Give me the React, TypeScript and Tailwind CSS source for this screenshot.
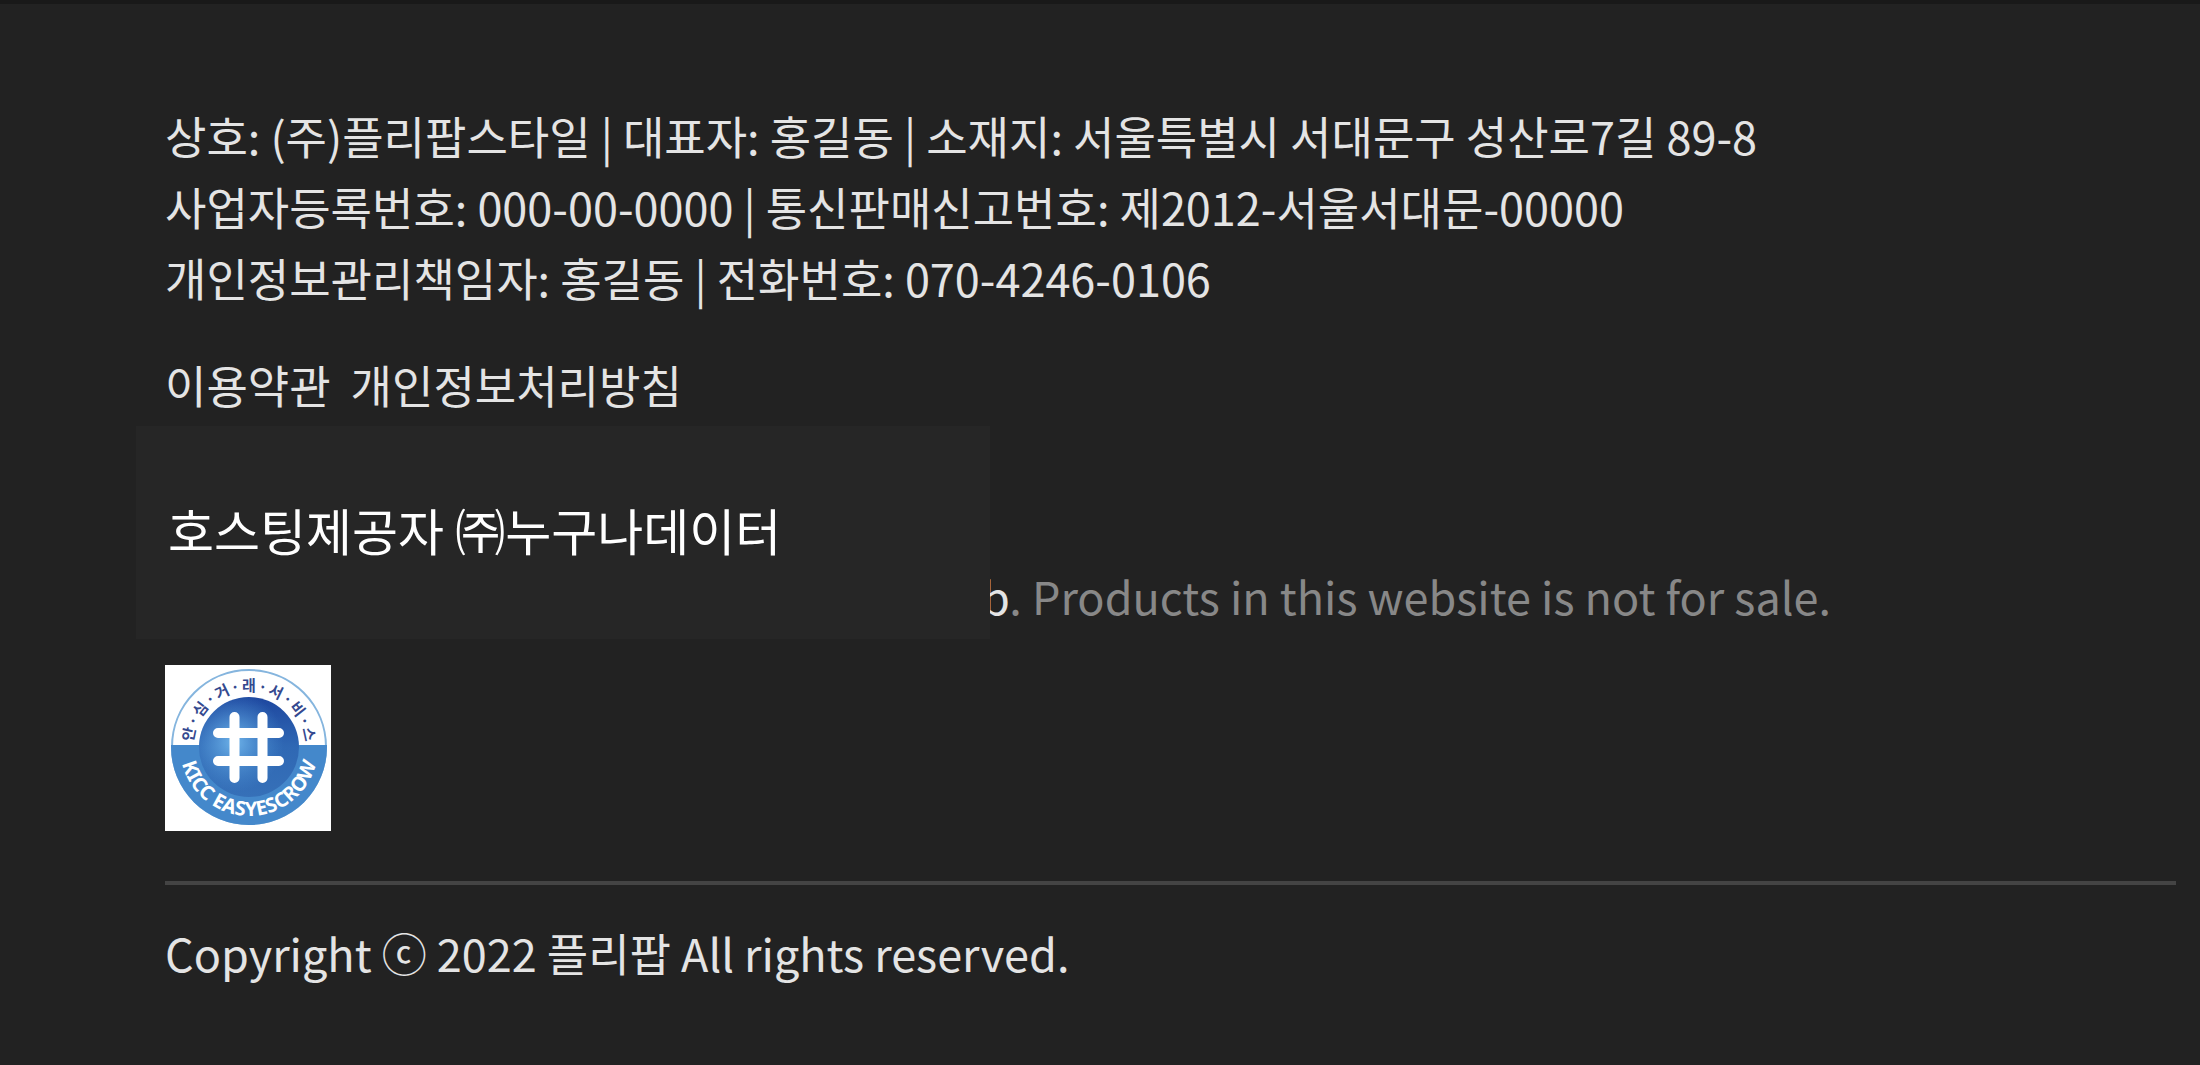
const companyInfo = [
  '상호: (주)플리팝스타일 | 대표자: 홍길동 | 소재지: 서울특별시 서대문구 성산로7길 89-8',
  '사업자등록번호: 000-00-0000 | 통신판매신고번호: 제2012-서울서대문-00000',
  '개인정보관리책임자: 홍길동 | 전화번호: 070-4246-0106',
];

const sealTop = '안·심·거·래·서·비·스'.split('');

function EscrowSeal() {
  return (
    <svg
      className="block size-[166px] bg-white"
      viewBox="0 0 166 166"
      role="img"
      aria-label="KICC EASYESCROW"
    >
      <defs>
        <linearGradient id="sealCore" x1="0" y1="0" x2="0" y2="1">
          <stop offset="0" stopColor="#1e479f" />
          <stop offset="0.5" stopColor="#2f68b4" />
          <stop offset="1" stopColor="#3670b8" />
        </linearGradient>
        <radialGradient id="sealGlow" cx="0.35" cy="0.45" r="0.5">
          <stop offset="0" stopColor="#6fb4ea" />
          <stop offset="1" stopColor="#4a90d4" stopOpacity="0" />
        </radialGradient>
        <path id="sealArc" d="M15 82a69 69 0 0 0 138 0" />
      </defs>
      <circle cx="84" cy="82" r="77" fill="#fff" stroke="#85b5de" strokeWidth="2" />
      <path d="M6 80h156v2a78 78 0 0 1 -156 0z" fill="#4488cb" />
      <circle cx="84" cy="82" r="50" fill="url(#sealCore)" />
      <circle cx="84" cy="82" r="50" fill="url(#sealGlow)" />
      <path
        d="M69.5 52v61M97.5 52v61M53 68h61M53 96h61"
        fill="none"
        stroke="#fff"
        strokeWidth="10"
        strokeLinecap="round"
      />
      {sealTop.map((letter, i) => (
        <text
          key={i}
          x="84"
          y="26"
          textAnchor="middle"
          transform={`rotate(${(i - 6) * 13} 84 82)`}
          className="fill-[#34498f] font-['Noto_Sans_CJK_KR',sans-serif] text-[15px] font-bold"
        >
          {letter}
        </text>
      ))}
      <text className="fill-white font-['Noto_Sans',sans-serif] text-[20px] font-bold">
        <textPath href="#sealArc" startOffset="50%" textAnchor="middle">
          KICC EASYESCROW
        </textPath>
      </text>
    </svg>
  );
}

export default function App() {
  return (
    <footer className="min-h-screen border-t-4 border-[#191919] bg-[#222222] pt-24 pr-6 pl-[165px] font-['Noto_Sans_CJK_KR',sans-serif] text-[45px] leading-[71px] text-[#e4e4e4]">
      <address className="not-italic">
        {companyInfo.map((line) => (
          <p key={line}>{line}</p>
        ))}
      </address>

      <nav className="mt-9 flex gap-5">
        <a href="#terms">이용약관</a>
        <a href="#privacy">개인정보처리방침</a>
      </nav>

      <div className="mt-1.5 -ml-[29px] flex items-end">
        <p className="relative z-10 w-[854px] bg-[#262626] px-8 pt-[68px] pb-[74px] text-[50px] text-white">
          호스팅제공자 ㈜누구나데이터
        </p>
        <p className="-ml-2 pb-2 text-[#888888]">
          <a href="#web" className="text-[#e4e4e4]">b</a>. Products in this website is not for sale.
        </p>
      </div>

      <div className="mt-[26px]">
        <EscrowSeal />
      </div>

      <hr className="mt-[50px] border-t-4 border-[#444444]" />
      <p className="mt-8">Copyright ⓒ 2022 플리팝 All rights reserved.</p>
    </footer>
  );
}
